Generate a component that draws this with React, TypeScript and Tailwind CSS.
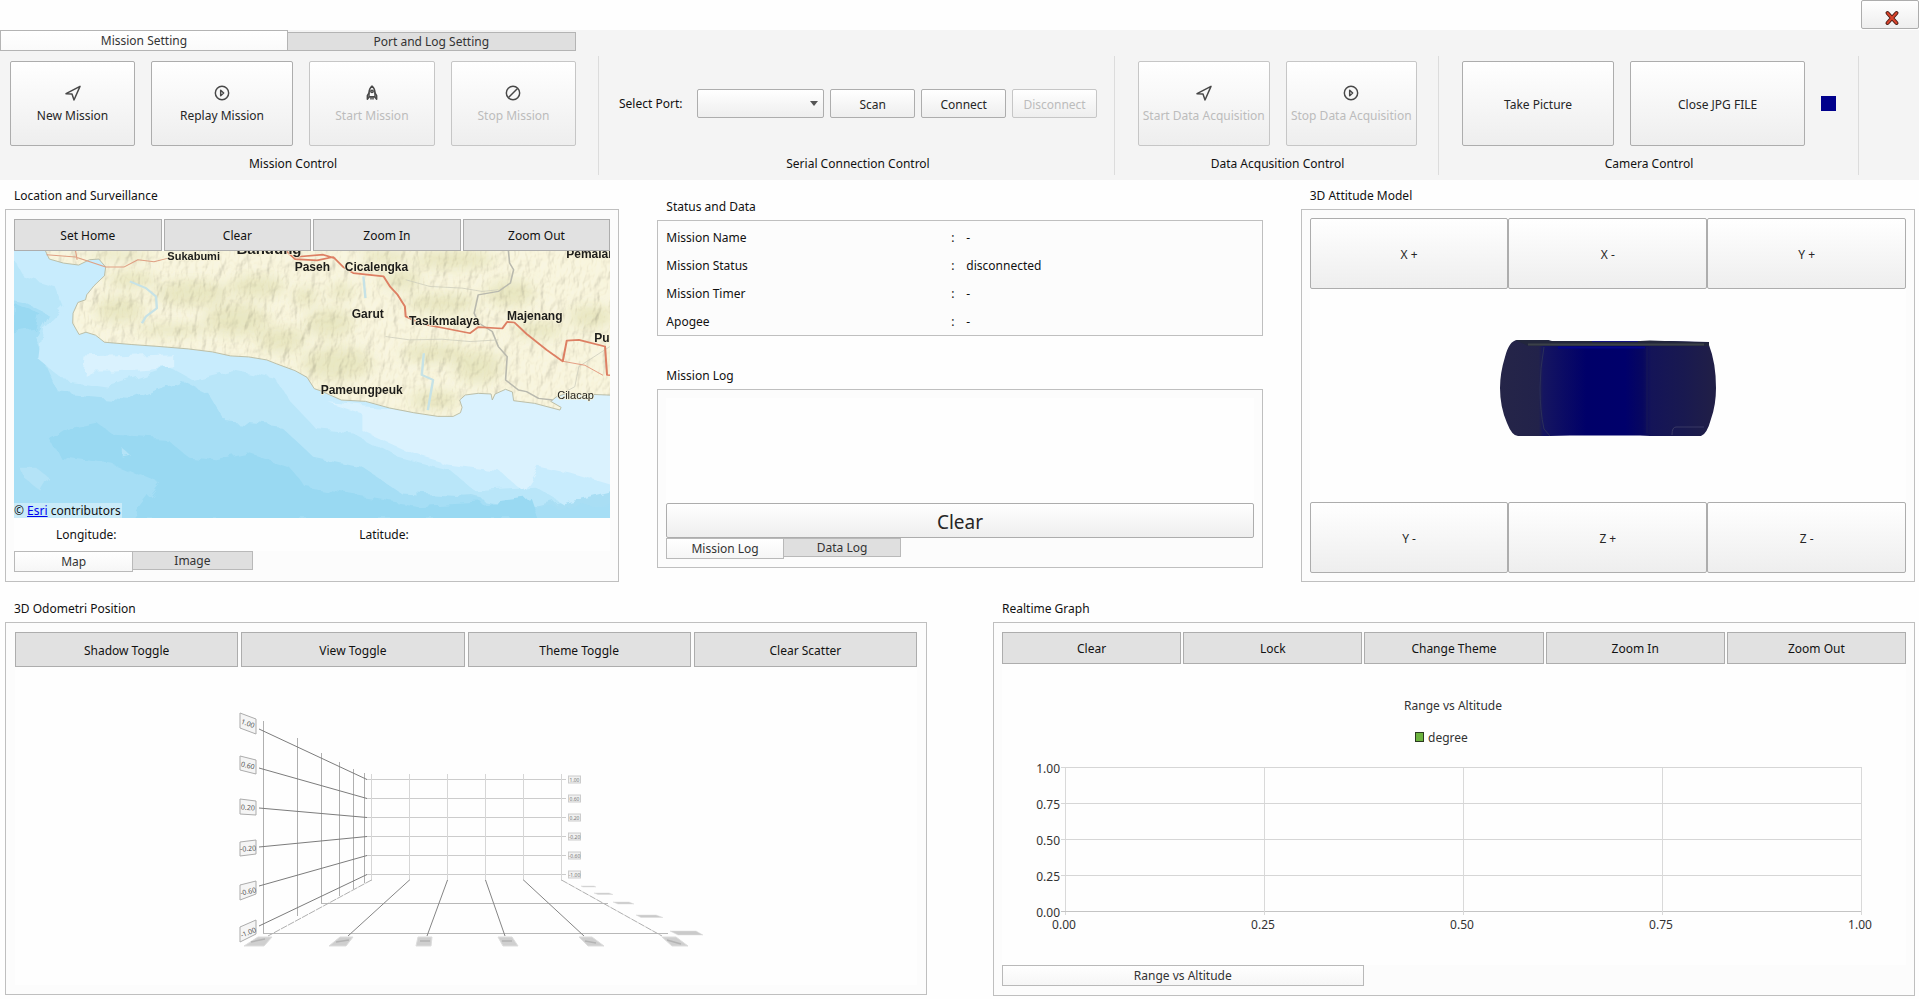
import React, { useState } from "react";

type IconName = "navigate" | "replay" | "rocket" | "stop";

function Icon({ name }: { name: IconName }) {
  return (
    <svg
      viewBox="0 0 24 24"
      className="size-4 text-[#484848]"
      fill="none"
      stroke="currentColor"
      strokeWidth="2.2"
      strokeLinejoin="round"
      strokeLinecap="round"
      aria-hidden="true"
    >
      {name === "navigate" && <path d="M1.5 13 22.500 2 13.500 22.500l-3-9z" />}
      {name === "replay" && (
        <>
          <circle cx="12" cy="12" r="10" />
          <path d="M10 7.8v8.4l4.5-4.2z" />
        </>
      )}
      {name === "rocket" && (
        <>
          <path d="M12 1.5C8.5 4.5 7.5 8 7.5 12v5.5h9V12c0-4-1-7.500-4.500-10.500z" />
          <circle cx="12" cy="9.500" r="1.800" />
          <path d="M7.500 12 5 16v5.500l2.500-3M16.500 12l2.500 4v5.500l-2.500-3M10.500 18v3M13.500 18v3" />
        </>
      )}
      {name === "stop" && (
        <>
          <circle cx="12" cy="12" r="10" />
          <path d="m6 18 12-12" />
        </>
      )}
    </svg>
  );
}

const raised =
  "border border-[#adadad] rounded-[2px] bg-linear-to-b from-white to-[#eeeeee] pt-[2px] text-[#262626] disabled:border-[#c6c6c6] disabled:text-[#bcbcbc] whitespace-nowrap min-w-0";

function BigButton({
  icon,
  label,
  disabled,
  className = "",
}: {
  icon?: IconName;
  label: string;
  disabled?: boolean;
  className?: string;
}) {
  return (
    <button
      type="button"
      disabled={disabled}
      className={`${raised} flex h-[85px] flex-col items-center justify-center gap-[6px] ${className}`}
    >
      {icon && <Icon name={icon} />}
      <span>{label}</span>
    </button>
  );
}

function Group({
  label,
  className = "",
  children,
}: {
  label: string;
  className?: string;
  children: React.ReactNode;
}) {
  return (
    <section className="flex min-w-0">
      <div className={`flex min-w-0 grow flex-col pt-[10px] ${className}`}>
        <div className="flex h-[85px] items-center">{children}</div>
        <h2 className="mt-2 h-5 text-center leading-5">{label}</h2>
      </div>
      <div className="my-[5px] w-px bg-[#dcdcdc]" />
    </section>
  );
}

function Panel({
  title,
  className = "",
  children,
}: {
  title: string;
  className?: string;
  children: React.ReactNode;
}) {
  return (
    <section className="min-w-0">
      <h2 className="mb-1 h-5 pt-px pl-[9px] leading-5">{title}</h2>
      <div className={`border border-[#bfbfbf] bg-[#fcfcfc] ${className}`}>{children}</div>
    </section>
  );
}

function FlatBar({ labels, height, gap }: { labels: string[]; height: string; gap: string }) {
  return (
    <div className={`flex ${gap}`}>
      {labels.map((l) => (
        <button
          key={l}
          type="button"
          className={`min-w-0 flex-1 border border-[#adadad] bg-[#e1e1e1] pt-[2px] ${height}`}
        >
          {l}
        </button>
      ))}
    </div>
  );
}

function BottomTabs({ labels, width }: { labels: string[]; width: string }) {
  const [active, setActive] = useState(0);
  return (
    <div role="tablist" className="flex h-[21px] items-start">
      {labels.map((l, i) => (
        <button
          key={l}
          type="button"
          role="tab"
          aria-selected={i === active}
          onClick={() => setActive(i)}
          className={`${width} border border-[#b9b9b9] text-[#333] ${
            i === active
              ? "h-[21px] bg-linear-to-b from-white to-[#f6f6f6]"
              : "h-[19px] border-l-0 bg-[#dfdfdf]"
          }`}
        >
          {l}
        </button>
      ))}
    </div>
  );
}

const LAND =
  "M112 205 L125 238 L160 250 L198 256 L225 240 L248 238 L265 262 L262 288 L236 318 L218 345 L215 360 L196 368 L184 400 L183 430 L199 464 L216 457 L240 466 L262 487 L330 494 L400 500 L470 507 L530 516 L575 528 L620 531 L665 540 L690 552 L735 572 L765 592 L783 626 L800 633 L850 660 L910 664 L970 684 L1030 698 L1090 709 L1128 709 L1146 698 L1150 682 L1144 660 L1158 645 L1190 640 L1222 642 L1225 660 L1232 642 L1258 628 L1275 636 L1278 662 L1330 670 L1393 690 L1396 682 L1370 664 L1385 650 L1410 640 L1530 646 L1530 205 Z";

const HILLS: [number, number, number, number][] = [
  [330, 300, 60, 25],
  [300, 390, 60, 40],
  [480, 340, 90, 40],
  [430, 450, 90, 18],
  [590, 420, 80, 50],
  [640, 320, 70, 35],
  [760, 350, 30, 30],
  [850, 335, 30, 25],
  [820, 430, 60, 45],
  [700, 480, 60, 40],
  [840, 550, 90, 50],
  [1000, 300, 50, 30],
  [1100, 370, 90, 30],
  [1080, 520, 80, 30],
  [1190, 560, 60, 50],
  [1080, 660, 60, 30],
  [1270, 340, 60, 40],
  [1340, 450, 60, 25],
  [1470, 410, 55, 35],
  [1130, 240, 100, 30],
  [960, 230, 60, 20],
  [300, 225, 80, 14],
];

const PLACES: [string, number, number, number][] = [
  ["Bandung", 222, 3, 15],
  ["Sukabumi", 153, 9, 11],
  ["Paseh", 280, 20, 12],
  ["Cicalengka", 330, 20, 12],
  ["Garut", 337, 67, 12],
  ["Tasikmalaya", 394, 74, 12],
  ["Majenang", 492, 69, 12],
  ["Pameungpeuk", 306, 143, 12],
  ["Pemalang", 551, 7, 12],
  ["Purwokerto", 579, 91, 12],
];

function MapView() {
  return (
    <div className="relative">
      <svg
        viewBox="0 0 595 267"
        preserveAspectRatio="xMidYMid slice"
        className="block h-[267px] w-full bg-[#a9def4]"
        role="img"
        aria-label="Map of West Java"
      >
        <defs>
          <filter id="relief" x="0" y="0" width="100%" height="100%">
            <feTurbulence type="fractalNoise" baseFrequency="0.11 0.06" numOctaves="4" seed="11" />
            <feDiffuseLighting surfaceScale="4" diffuseConstant="1.2" lightingColor="#fffbe8">
              <feDistantLight azimuth="225" elevation="58" />
            </feDiffuseLighting>
          </filter>
          <filter id="soft" x="-30%" y="-30%" width="160%" height="160%">
            <feGaussianBlur stdDeviation="16" />
          </filter>
          <filter id="ragged" x="-5%" y="-5%" width="110%" height="110%">
            <feTurbulence type="fractalNoise" baseFrequency="0.05" numOctaves="3" seed="4" />
            <feDisplacementMap in="SourceGraphic" scale="14" />
          </filter>
          <clipPath id="land">
            <path d={LAND} transform="matrix(.4018 0 0 .3333 -15 -71)" />
          </clipPath>
        </defs>
        <g filter="url(#ragged)">
          <g transform="matrix(.4018 0 0 .3333 -15 -71)">
            <path
              fill="#b9e6f9"
              d="M0 180 H1560 V920 L1420 900 1400 960 1300 990 1180 950 1060 960 900 930 740 930 690 850 540 820 420 780 380 720 240 700 150 760 80 720 0 740Z"
            />
            <path
              fill="#a6def5"
              d="M0 350 L60 365 120 400 90 470 120 560 150 640 330 660 450 600 520 640 560 720 700 740 780 830 900 860 1000 940 1140 950 1350 980 1560 970 V1080 H0Z"
            />
            <path
              fill="#c8ecfd"
              d="M20 205 L60 290 140 320 160 380 110 440 100 540 160 600 270 620 420 560 480 600 580 570 690 600 720 660 790 750 880 760 990 830 1120 870 1180 930 1330 920 1400 970 1560 920 V205Z"
            />
            <path
              fill="#daf2fe"
              d="M210 530 L430 520 430 560 290 575 205 575Z M820 670 L900 700 900 750 1030 820 1110 850 1240 870 1300 930 1340 860 1420 880 1560 930 V600 H1150 L1100 700Z"
            />
            <path
              fill="#99d9f2"
              d="M40 370 L100 400 90 450 36 460Z M130 780 L180 740 240 725 290 770 420 780 470 830 540 840 620 820 720 860 760 920 860 940 960 960 1050 980 1200 970 1320 950 1340 1020 H330 L400 910 280 850 150 830Z"
            />
            <path fill="#b4e3f7" d="M50 860 L90 860 130 900 110 940 60 890Z M310 810 L330 830 310 835Z" />
          </g>
        </g>
        <g transform="matrix(.4018 0 0 .3333 -15 -71)">
          <path d={LAND} fill="#f5f1d6" />
        </g>
        <g clipPath="url(#land)">
          <g transform="matrix(.4018 0 0 .3333 -15 -71)" filter="url(#soft)">
            {HILLS.map(([x, y, rx, ry], i) => (
              <ellipse key={i} cx={x} cy={y} rx={rx} ry={ry} fill="#d6d6a4" opacity="0.45" />
            ))}
          </g>
          <rect width="595" height="267" filter="url(#relief)" className="opacity-30 mix-blend-multiply" />
        </g>
        <g transform="matrix(.4018 0 0 .3333 -15 -71)" fill="none" strokeLinejoin="round">
          <path d={LAND} stroke="#b5b8a0" strokeWidth="2.400" />
          <path
            stroke="#b9b9ae"
            strokeWidth="4"
            d="M1265 212 L1268 250 1278 270 1270 310 1240 335 1190 345 1180 400 1192 430 1225 455 1240 500 1262 530 1258 600 1290 630 1310 635 1340 655 1375 660"
          />
          <path stroke="#cbcbbb" strokeWidth="2" d="M1010 300 L1070 320 1150 325 1200 335 1240 330 M960 470 L1020 480 1100 478 1170 485 1240 480 M1517 500 L1440 560 1430 620 1400 640" />
          <path
            stroke="#c6e2e6"
            strokeWidth="6"
            d="M325 305 L365 325 390 350 392 385 365 410 355 430 M905 290 L910 355 M1055 520 L1050 585 1078 600 1065 690"
          />
          <path stroke="#dfa084" strokeWidth="3" d="M118 225 L190 232 265 262 310 262 345 240 385 246 418 236 M190 212 L194 240" />
          <path
            stroke="#dd7f63"
            strokeWidth="5"
            d="M712 212 L735 238 790 242 830 232 855 262 880 280 955 290 972 322 990 345 1008 380 1010 410 1050 432 1110 446 1170 460 1190 442 1250 446 1262 426 1280 428 1310 462 1360 510 1400 544 1410 482 1440 480 1505 500 1510 585 1530 586 M735 232 L805 225 835 236"
          />
          <path stroke="#dd7f63" strokeWidth="2" d="M1400 544 L1455 556 1500 586" />
        </g>
        <g className="font-['Liberation_Sans',Arial,sans-serif] font-bold" fill="#1d1d1b" stroke="#f6f1d6" strokeWidth="1.500" strokeLinejoin="round" paintOrder="stroke">
          {PLACES.map(([name, x, y, size]) => (
            <text key={name} x={x} y={y} fontSize={size}>
              {name}
            </text>
          ))}
          <text x="542" y="148" fontSize="11" className="font-normal">
            Cilacap
          </text>
        </g>
      </svg>
      <p className="absolute bottom-0 left-0 bg-white/40 pr-px leading-[15px]">
        ©{" "}
        <a href="#esri" className="text-[#0000ee] underline">
          Esri
        </a>{" "}
        contributors
      </p>
    </div>
  );
}

function CapsuleModel() {
  return (
    <svg viewBox="0 0 216 98" className="h-[98px] w-[216px]" role="img" aria-label="Attitude model">
      <defs>
        <linearGradient id="hull" x1="0" x2="1" y1="0" y2="0">
          <stop offset="0" stopColor="#252548" />
          <stop offset="0.18" stopColor="#22224a" />
          <stop offset="0.2" stopColor="#151560" />
          <stop offset="0.4" stopColor="#000069" />
          <stop offset="0.58" stopColor="#00006b" />
          <stop offset="0.66" stopColor="#07075f" />
          <stop offset="0.7" stopColor="#141458" />
          <stop offset="0.85" stopColor="#191950" />
          <stop offset="1" stopColor="#211f46" />
        </linearGradient>
      </defs>
      <path
        d="M17 1 Q9 2 5 18 Q0 34 0 49 Q0 68 7 84 Q12 97 18 97 H50 L70 96.500 H140 L150 97 H201 Q207 95 211 80 Q216 66 216 49 Q216 24 209 6 V3 L170 2 H50 L48 1Z"
        fill="url(#hull)"
      />
      <path d="M15 1 H48 L52 2 H140 L150 1.500 L209 3.500 V7 H28 L24 5Z" fill="#22263c" />
      <path d="M28 5.500 H204" stroke="#3b4048" strokeWidth="2" />
      <path d="M92 2.500 H138" stroke="#12127a" />
      <path d="M58 8.500 H145" stroke="#050588" strokeWidth="2" />
      <path d="M44 8 Q40 30 40 49 Q40 72 44 90 L50 97" stroke="#2b3058" fill="none" />
      <path d="M147 8 V94" stroke="#191956" />
      <path d="M172 96 Q172 88 176 88 H204" stroke="#393964" fill="none" />
    </svg>
  );
}

const WALL_Y = [779, 798, 817, 836, 855, 874];
const WALL_X = [371.5, 409.5, 447.5, 485.5, 523.5, 561.5];
const FRONT_Y = [728, 767, 807, 846, 885, 925];
const FRONT_X = [268, 348, 427, 505, 584, 662];
const SIDE: [number, number, number][] = [
  [263.5, 720, 932],
  [297.5, 737, 915],
  [321.5, 752, 902],
  [339.5, 761, 895],
  [353.5, 768, 888],
  [364.5, 772, 882],
];
const AXIS = ["1.00", "0.60", "0.20", "-0.20", "-0.60", "-1.00"];
const SIDE_LABELS = [
  "240,712 256,718 256,733 240,727",
  "240,755 256,759 256,773 240,769",
  "240,798 256,800 256,814 240,813",
  "240,841 256,839 256,853 240,855",
  "240,884 256,880 256,893 240,899",
  "240,926 256,919 256,933 240,941",
];
const SIDE_TILT = [20, 14, 4, -4, -14, -22];
const FLOOR_LABELS = [
  "258,936 272,936 264,945 244,945",
  "340,936 353,936 346,945 329,945",
  "418,936 432,936 431,945 416,945",
  "498,936 512,936 518,945 503,945",
  "579,936 592,936 604,945 588,945",
  "662,936 676,936 688,945 672,945",
];
const DEPTH_LABELS = [
  "581,885 594,885 596,886 583,886",
  "594,892 609,892 613,893.500 598,893.500",
  "613,901 629,901 634,903 618,903",
  "636,914 656,914 663,916.500 641,916.500",
  "670,930 696,930 703,934 678,934",
];

function ScatterScene() {
  return (
    <svg
      viewBox="15 666 902 318"
      className="block h-[318px] w-full bg-[#fefefe]"
      role="img"
      aria-label="3D odometry scatter"
    >
      <g fill="none" stroke="#d6d6d6">
        {WALL_Y.map((y) => (
          <path key={y} d={`M366 ${y - 0.5} H566`} stroke="#cccccc" />
        ))}
        {WALL_X.map((x) => (
          <path key={x} d={`M${x} 773 V880`} />
        ))}
        {SIDE.map(([x, a, b]) => (
          <path key={x} d={`M${x} ${a} V${b}`} stroke="#b0b0b0" />
        ))}
        <path d="M263 932.500 H668 M321 902.500 H608" stroke="#b8b8b8" />
      </g>
      <g fill="none" stroke="#7c7c7c">
        {FRONT_Y.map((y, i) => (
          <path key={y} d={`M259 ${y} L367 ${WALL_Y[i] - 0.5}`} />
        ))}
        {FRONT_X.map((x, i) => (
          <path
            key={x}
            d={`M${WALL_X[i]} 879 L${x} 935`}
            strokeDasharray={i === 0 || i === 5 ? "7 1" : undefined}
            stroke={i === 0 || i === 5 ? "#b0b0b0" : "#858585"}
          />
        ))}
      </g>
      <g className="font-['Noto_Sans',sans-serif]" textAnchor="middle" fill="#555555">
        {SIDE_LABELS.map((p, i) => (
          <g key={p}>
            <polygon points={p} fill="#f5f5f5" stroke="#ababab" />
            <text x="248" y={[725, 767, 809, 850, 893, 934][i]} fontSize="7" transform={`rotate(${SIDE_TILT[i]} 248 ${[722, 764, 806, 847, 890, 931][i]})`}>
              {AXIS[i]}
            </text>
          </g>
        ))}
        {WALL_Y.map((y, i) => (
          <g key={y}>
            <rect x="568.500" y={y - 4} width="12" height="7" fill="#f1f1f1" stroke="#cccccc" />
            <text x="574.500" y={y + 1.500} fontSize="5" fill="#777777">
              {AXIS[i]}
            </text>
          </g>
        ))}
        {FLOOR_LABELS.map((p) => (
          <polygon key={p} points={p} fill="#cfcfcf" stroke="#dddddd" />
        ))}
        {DEPTH_LABELS.map((p) => (
          <polygon key={p} points={p} fill="#cacaca" stroke="#dddddd" strokeWidth="0.500" />
        ))}
        <path d="M251 941 L265 938 M336 941 L349 939 M420 940 H430 M502 940 H512 M585 940 L596 942 M667 939 L681 943" stroke="#b4b4b4" strokeWidth="1.500" />
      </g>
    </svg>
  );
}

const TICKS = ["0.00", "0.25", "0.50", "0.75", "1.00"];

function RangeChart() {
  return (
    <svg
      viewBox="1003 663 902 301"
      className="block h-[301px] w-full bg-[#fefefe] font-['Noto_Sans',sans-serif] text-[12px]"
      fill="#333333"
      role="img"
      aria-label="Range vs Altitude"
    >
      <text x="1453" y="709" textAnchor="middle">
        Range vs Altitude
      </text>
      <rect x="1415.500" y="731.500" width="8" height="9" fill="#6cb33f" stroke="#2b3a20" />
      <text x="1428" y="741">degree</text>
      {TICKS.map((t, i) => {
        const x = 1065.5 + i * 199;
        const y = 910.5 - i * 36;
        return (
          <g key={t}>
            <path d={`M${x} 766 V914`} stroke="#d9d9d9" />
            <path d={`M1061 ${y} H1862`} stroke={i === 0 ? "#c4c4c4" : "#d6d6d6"} />
            <text x={x - 1.5} y="928" textAnchor="middle">
              {t}
            </text>
            <text x="1060" y={y + 5} textAnchor="end">
              {t}
            </text>
          </g>
        );
      })}
    </svg>
  );
}

const STATUS: [string, string][] = [
  ["Mission Name", "-"],
  ["Mission Status", "disconnected"],
  ["Mission Timer", "-"],
  ["Apogee", "-"],
];

function AxisRow({ labels }: { labels: string[] }) {
  return (
    <div className="flex">
      {labels.map((l) => (
        <button key={l} type="button" className={`${raised} h-[71px] flex-1`}>
          {l}
        </button>
      ))}
    </div>
  );
}

export default function App() {
  return (
    <div className="min-h-screen bg-[#fefefe] font-['Noto_Sans',sans-serif] text-[12px] leading-[18px] text-[#111]">
      <header className="flex h-[30px] items-start justify-end">
        <button
          type="button"
          aria-label="Close"
          className="flex h-[29px] w-[58px] items-center justify-center rounded-[2px] border border-[#adadad] bg-linear-to-b from-white to-[#eeeeee] pt-[6px] pl-[3px]"
        >
          <svg viewBox="0 0 16 16" className="size-4" strokeLinecap="round" aria-hidden="true">
            <path d="m3.500 3 9 10M12.500 3l-9 10" stroke="#4c1d16" strokeWidth="4" />
            <path d="m3.500 3 9 10M12.500 3l-9 10" stroke="#d8432b" strokeWidth="2" />
          </svg>
        </button>
      </header>

      <div className="bg-[#f4f4f4]">
        <div role="tablist" className="flex h-[21px] items-end text-[#333]">
          <button
            type="button"
            role="tab"
            aria-selected="true"
            className="h-[21px] w-[15%] border border-[#b4b4b4] bg-linear-to-b from-white to-[#fafafa] pt-px leading-[18px]"
          >
            Mission Setting
          </button>
          <button
            type="button"
            role="tab"
            aria-selected="false"
            className="h-[19px] w-[15%] border border-l-0 border-[#b4b4b4] bg-[#dfdfdf] leading-[17px]"
          >
            Port and Log Setting
          </button>
        </div>

        <div className="grid h-[129px] grid-cols-[599fr_516fr_324fr_420fr_60fr]">
          <Group label="Mission Control" className="pr-[22px] pl-[10px]">
            <div className="flex w-full gap-4">
              <BigButton icon="navigate" label="New Mission" className="flex-[125]" />
              <BigButton icon="replay" label="Replay Mission" className="flex-[142]" />
              <BigButton icon="rocket" label="Start Mission" disabled className="flex-[126]" />
              <BigButton icon="stop" label="Stop Mission" disabled className="flex-[125]" />
            </div>
          </Group>

          <Group label="Serial Connection Control" className="pr-[17px] pl-5">
            <div className="flex w-full items-center gap-[6px]">
              <label htmlFor="port" className="w-[72px] shrink-0">
                Select Port:
              </label>
              <div className="relative flex-[129]">
                <select id="port" className={`${raised} h-[29px] w-full appearance-none px-2`}>
                  <option value=""></option>
                </select>
                <svg viewBox="0 0 8 5" className="pointer-events-none absolute top-3 right-[6px] h-[5px] w-2" aria-hidden="true">
                  <path d="M0 0h8L4 5z" fill="#555555" />
                </svg>
              </div>
              <button type="button" className={`${raised} h-[29px] flex-[84]`}>
                Scan
              </button>
              <button type="button" className={`${raised} h-[29px] flex-[84]`}>
                Connect
              </button>
              <button type="button" disabled className={`${raised} h-[29px] flex-[84]`}>
                Disconnect
              </button>
            </div>
          </Group>

          <Group label="Data Acqusition Control" className="pr-[21px] pl-[23px]">
            <div className="flex w-full gap-4">
              <BigButton icon="navigate" label="Start Data Acquisition" disabled className="flex-1" />
              <BigButton icon="replay" label="Stop Data Acquisition" disabled className="flex-1" />
            </div>
          </Group>

          <Group label="Camera Control" className="pr-[22px] pl-[23px]">
            <div className="flex w-full items-center gap-4">
              <BigButton label="Take Picture" className="flex-[152]" />
              <BigButton label="Close JPG FILE" className="flex-[175]" />
              <div className="size-[15px] shrink-0 bg-[#00008b]" />
            </div>
          </Group>
        </div>
      </div>

      <main className="pr-1 pb-1 pl-[5px]">
        <div className="grid grid-cols-[614fr_605fr_614fr] gap-x-[38px] pt-[5px]">
          <Panel title="Location and Surveillance" className="px-2 py-[9px]">
            <FlatBar labels={["Set Home", "Clear", "Zoom In", "Zoom Out"]} height="h-[32px]" gap="gap-[2px]" />
            <MapView />
            <div className="grid h-[33px] grid-cols-2 items-center bg-[#fefefe] pt-px">
              <span className="pl-[42px]">Longitude:</span>
              <span className="pl-[47px]">Latitude:</span>
            </div>
            <BottomTabs labels={["Map", "Image"]} width="w-1/5" />
          </Panel>

          <div className="pt-[11px]">
            <Panel title="Status and Data" className="h-[116px] px-2 pt-[3px]">
              <dl>
                {STATUS.map(([name, value]) => (
                  <div key={name} className="grid h-7 grid-cols-[285px_15px_1fr] items-center">
                    <dt>{name}</dt>
                    <span>:</span>
                    <dd>{value}</dd>
                  </div>
                ))}
              </dl>
            </Panel>
            <div className="pt-[29px]">
              <Panel title="Mission Log" className="p-2">
                <textarea
                  readOnly
                  aria-label="Mission log output"
                  className="block h-[105px] w-full resize-none bg-[#fefefe] outline-none"
                />
                <button type="button" className={`${raised} block h-[35px] w-full text-[19px] leading-[26px]`}>
                  Clear
                </button>
                <BottomTabs labels={["Mission Log", "Data Log"]} width="w-1/5" />
              </Panel>
            </div>
          </div>

          <Panel title="3D Attitude Model" className="p-2">
            <AxisRow labels={["X +", "X -", "Y +"]} />
            <div className="flex h-[213px] items-center justify-center bg-[#fefefe] pb-4">
              <CapsuleModel />
            </div>
            <AxisRow labels={["Y -", "Z +", "Z -"]} />
          </Panel>
        </div>

        <div className="grid grid-cols-[922fr_922fr] gap-x-[66px] pt-4">
          <Panel title="3D Odometri Position" className="p-[9px]">
            <FlatBar
              labels={["Shadow Toggle", "View Toggle", "Theme Toggle", "Clear Scatter"]}
              height="h-[35px]"
              gap="gap-[3px]"
            />
            <ScatterScene />
          </Panel>
          <Panel title="Realtime Graph" className="px-2 py-[9px]">
            <FlatBar
              labels={["Clear", "Lock", "Change Theme", "Zoom In", "Zoom Out"]}
              height="h-[32px]"
              gap="gap-[2px]"
            />
            <RangeChart />
            <BottomTabs labels={["Range vs Altitude"]} width="w-2/5" />
          </Panel>
        </div>
      </main>
    </div>
  );
}
